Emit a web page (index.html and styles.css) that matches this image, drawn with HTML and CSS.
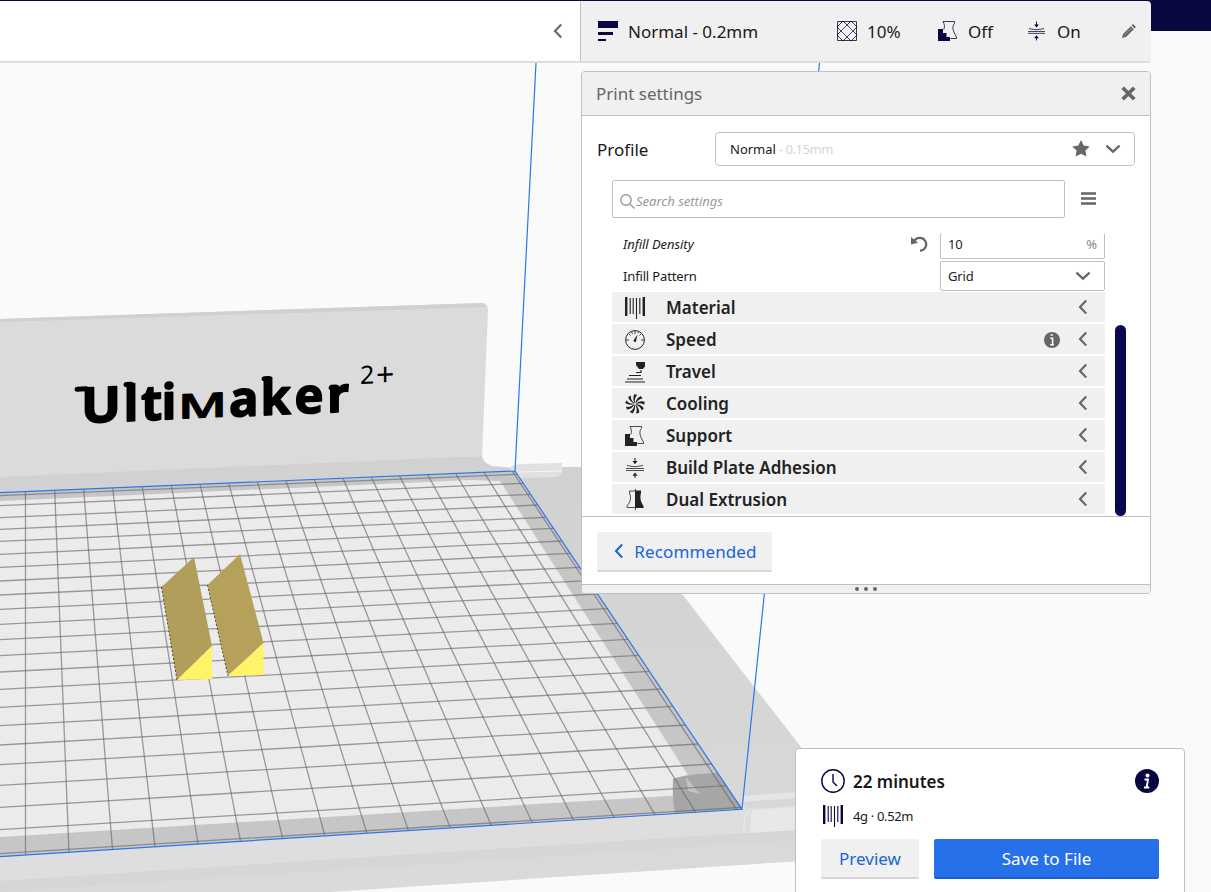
FILE: index.html
```html
<!DOCTYPE html>
<html lang="en">
<head>
<meta charset="utf-8">
<title>Print settings</title>
<link rel="stylesheet" href="styles.css">
</head>
<body>
<svg class="defs" width="0" height="0" aria-hidden="true">
  <symbol id="left" viewBox="0 0 10 16"><path d="M8.200 1.600 2 8l6.200 6.400" fill="none" stroke="currentColor" stroke-width="2.100"/></symbol>
  <symbol id="down" viewBox="0 0 16 10"><path d="M1.400 1.600 8 7.700l6.600-6.100" fill="none" stroke="currentColor" stroke-width="2.300"/></symbol>
  <symbol id="spool" viewBox="0 0 20 22"><path d="M1.200 0v19M18.800 0v19" stroke="currentColor" stroke-width="2.400"/><path d="M5.200 1v16M8.200 1v16M11.500 1v21M14.800 1v16" stroke="currentColor" stroke-width="1.100"/></symbol>
  <symbol id="support" viewBox="0 0 20 20"><path d="M5 .5h11.500v1.800c-3 3.500-1.500 8 2 13.700v1.500h-6" fill="none" stroke="currentColor" stroke-width=".8"/><path d="M5 .5c1.500 2.700 2 5 .8 8" fill="none" stroke="currentColor" stroke-width=".8"/><path d="M0 8h5v4h3.500v4H12v4H0z" fill="currentColor"/></symbol>
  <symbol id="adhesion" viewBox="0 0 18 20"><path d="M0 10.500h18M0 12.500h18M1 7.500q8 2.500 16 0" fill="none" stroke="currentColor" stroke-width=".8"/><path d="M9 0v4M9 16v4" stroke="currentColor"/><path d="M6.500 3h5L9 6.300zM6.500 17.800h5L9 14.500z" fill="currentColor"/></symbol>
</svg>

<div class="app">
  <svg class="viewport" viewBox="0 0 1211 892">
    <defs>
      <linearGradient id="floor" x1="0" y1="0" x2="0" y2="1"><stop offset="0" stop-color="#d1d1d1"/><stop offset="1" stop-color="#dadada"/></linearGradient>
      <pattern id="fine" width="3" height="3" patternUnits="userSpaceOnUse" patternTransform="skewY(-3)"><path d="M0 .5h3M.5 0v3" stroke="#777" stroke-opacity=".04"/></pattern>
    </defs>
    <path d="M0 470 482 456q1 7 10 10l23 2 4-1h62l101 127 119 153v114L330 892H0z" fill="url(#floor)"/>
    <path d="M0 319 483 303q5 1 5 7l-6 146L0 477z" fill="#dbdbdb"/>
    <path d="M0 319 483 303l3 4L0 322z" fill="#d0d0d0"/>
    <path d="M0 857 742 809l54-4v25L400 855 33 879 0 881z" fill="#dedede"/>
    <path d="M0 881 400 855 796 830v10L400 866 0 892z" fill="#d6d6d6"/>
    <path d="M742 796l54-4v13l-54 4z" fill="#e5e5e5"/><path d="M742 802l54-4v8l-50 3z" fill="#d8d8d8"/>
    <path d="M752 810l44-3v23l-46 3z" fill="#e8e8e8"/><path d="M744 833q-1-18 5-22" fill="none" stroke="#eee"/>
    <path d="M519 464l43-1v11l-5 3-38 1-8-6v-6z" fill="#e1e1e1"/><path d="M519 472l43-1" stroke="#f5f5f5"/>
    <path d="M0 492.700 515 471 742 809 0 856.700z" fill="#c8c8c8"/>
    <path d="M0 501 470 480l30 1 27 42 173 271L0 837z" fill="#eee"/>
    <path d="M673 779q12-5 44-6l25 36-67 4q-3-15-2-34z" fill="#a7a7a7"/>
    <path d="M686 777l14 17-12-3z" fill="#c4c4c4"/>
    <path d="M0 492.700 515 471 742 809 0 856.700z" fill="url(#fine)"/>
    <g fill="none" stroke="#68696c" stroke-opacity=".64" stroke-width="1.300">
      <path d="M25.500 491.600V855.100M54.700 490.400 69 852.300M83.700 489.200 112.500 849.500M112.700 488 155 846.800M142.300 486.700 198 844.100M171.300 485.500 240.500 841.400M200 484.300 282.700 838.700M228.700 483.100 325 836M257.300 481.900 367 833.300M286 480.700 408.500 830.600M314.300 479.500 450.300 828M343 478.200 491.300 825.400M371.300 477.100 532.300 822.700M399.500 475.900 573.700 820.100M427.700 474.700 614.300 817.500M455.700 473.500 655 814.900M484 472.300 695.700 812.300M512.300 471.100 736.700 809.700"/>
      <path d="M0 495.700 517.200 474.300M0 505.700 523.300 483.300M0 517.700 530.600 494.300M0 529.300 537.800 505M0 541.300 546.100 517.300M0 554.300 553.500 528.300M0 567.300 562 541M0 581 570.300 553.300M0 595 579.700 567.300M0 609.300 588.700 580.700M0 624.300 597.600 594M0 639.700 607.500 608.700M0 655.700 617.300 623.300M0 672 628 639.300M0 689.300 638.800 655.300M0 707.300 649.500 671.300M0 725.700 661.400 689M0 745 673 706.300M0 764.700 685.600 725M0 785.300 698.300 744M0 807.300 711.800 764M0 829.700 726.300 785.700M0 853.700 740.900 807.300"/>
    </g>
    <path d="M0 492.700 515 471 742 809.300 0 856.700M536 63 515 471M819.500 63 742 809" fill="none" stroke="#2c76ea" stroke-width="1.200"/>
    <path d="M194 557 212 646 177 680 161.500 587z" fill="#b29e5b"/><path d="M240 554 263.500 643 228 676 207.500 585z" fill="#b6a15b"/>
    <path d="M212 646v33l-35 1zM263.500 643v32l-36 1z" fill="#fff368"/>
    <path d="M161.500 587 177 680M207.500 585 228 676" stroke="#4f482f" stroke-dasharray="2 2"/>
    <g class="brand" transform="matrix(1 -.043 0 1 0 426.500)">
      <text y="0"><tspan x="81" textLength="40" lengthAdjust="spacingAndGlyphs">U</tspan><tspan x="123.500">l</tspan><tspan x="141">t</tspan><tspan x="161.500">i</tspan></text>
      <text class="small-cap" x="178" y="0" textLength="49" lengthAdjust="spacingAndGlyphs">m</text>
      <text y="0"><tspan x="229">a</tspan><tspan x="260.500">k</tspan><tspan x="294.500">e</tspan><tspan x="327">r</tspan></text>
      <path d="M77-34h9M126-36.500h5M264-36.500h5M331-24.500h6" stroke="#000" stroke-width="5" stroke-linecap="round"/>
      <text class="model" y="-27" x="360">2</text><text class="model plus" y="-24" x="376">+</text>
    </g>
  </svg>

  <header class="navbar"></header>
  <div class="stage">
    <div class="stage-main"><svg class="chev" width="10" height="16"><use href="#left"/></svg></div>
    <div class="summary">
      <svg class="profile-icon" width="20" height="20"><path d="M0 0h20v7H0zM0 11h15v3H0zM0 18h8v2H0z" fill="#08073f"/></svg>
      <span class="sum-name">Normal - 0.2mm</span>
      <svg class="navy" width="20" height="20" fill="none" stroke="currentColor"><path d="M.5.500h19v19H.5zM0 6 6 0M0 14 14 0M6 20 20 6M14 20l6-6M0 6l14 14M0 14l6 6M6 0l14 14M14 0l6 6" stroke-width=".8"/><path d="M10 4.500 15.500 10 10 15.500 4.500 10z" fill="#f0f0f0" stroke="none"/></svg>
      <span class="sum-infill">10%</span>
      <svg class="navy" width="20" height="20"><use href="#support"/></svg>
      <span class="sum-support">Off</span>
      <svg class="navy" width="17" height="20"><use href="#adhesion"/></svg>
      <span class="sum-adhesion">On</span>
      <svg class="pencil" width="14" height="14"><path d="M0 14 1 10 8.800 2.200l3 3L4 13zM9.600 1.400 11 0l3 3-1.400 1.400z" fill="#666"/><path d="m2.500 11 7-7" stroke="#aaa" stroke-width=".7"/></svg>
    </div>
  </div>

  <section class="panel">
    <div class="panel-head"><span>Print settings</span><svg width="15" height="15"><path d="m1.700 1.700 11.600 11.600m0-11.600L1.700 13.300" stroke="#666" stroke-width="3.700"/></svg></div>
    <div class="profile"><label>Profile</label>
      <div class="combo"><span>Normal</span><span class="faint">- 0.15mm</span>
        <svg class="star" width="18" height="17"><path d="m9 0 2.700 5.500 6 .9-4.300 4.200 1 6L9 13.800l-5.400 2.800 1-6L.3 6.400l6-.9z" fill="#666"/></svg>
        <svg width="16" height="10"><use href="#down"/></svg></div>
    </div>
    <div class="search-row">
      <div class="search"><svg width="15" height="15" fill="none" stroke="#999" stroke-width="1.400"><circle cx="6" cy="6" r="5.200"/><path d="m10 10 4.500 4.500"/></svg><span>Search settings</span></div>
      <svg width="15" height="13"><path d="M0 1.500h15M0 6.500h15M0 11.500h15" stroke="#666" stroke-width="2.600"/></svg>
    </div>
    <div class="list-wrap">
      <div class="list">
        <div class="setting"><em>Infill Density</em><svg class="reset" width="17" height="16"><path d="M3.500 4.700A6.400 6.400 0 1 1 9 14.700" fill="none" stroke="#666" stroke-width="2.200"/><path d="M0 1v7.500l7-1.800z" fill="#666"/></svg><div class="field cut"><span>10</span><span class="unit">%</span></div></div>
        <div class="setting second"><span>Infill Pattern</span><div class="field"><span>Grid</span><svg width="16" height="10"><use href="#down"/></svg></div></div>
        <div class="cats">
          <div class="cat"><svg width="20" height="22"><use href="#spool"/></svg><b>Material</b><svg class="chev" width="10" height="16"><use href="#left"/></svg></div>
          <div class="cat"><svg width="20" height="20" fill="none" stroke="#222"><circle cx="10" cy="10" r="9.400"/><path d="M10 1v3M1 10h3M16 10h3M3.600 3.600l2 2M16.400 3.600l-2 2M6.500 1.700l1 2.500M13.500 1.700l-.6 1.500" stroke-width=".8"/><path d="m8.500 10.500 4-6-1.500 7q-1.500 1.500-2.500-1z" fill="#222" stroke="none"/></svg><b>Speed</b><svg class="info" width="16" height="16"><circle cx="8" cy="8" r="8" fill="#666"/><path d="M6.300 6.200h2.300v6M6.300 12.700h3.600M6.700 3h2.200" fill="none" stroke="#fff" stroke-width="1.500"/></svg><svg class="chev" width="10" height="16"><use href="#left"/></svg></div>
          <div class="cat"><svg width="21" height="22"><path d="M11 1h10v3l-3 4h-4l-3-4z" fill="#222"/><path d="M11 11.500h5V9M4 14.500h12M2 18h16M0 21h20" fill="none" stroke="#222" stroke-width="1.100"/></svg><b>Travel</b><svg class="chev" width="10" height="16"><use href="#left"/></svg></div>
          <div class="cat"><svg width="20" height="20"><g fill="#222"><path id="blade" d="M9.700 9Q7.200 4.500 9.200.3L12.300.8Q9 4 10.200 9z"/><use href="#blade" transform="rotate(40 10 10)"/><use href="#blade" transform="rotate(80 10 10)"/><use href="#blade" transform="rotate(120 10 10)"/><use href="#blade" transform="rotate(160 10 10)"/><use href="#blade" transform="rotate(200 10 10)"/><use href="#blade" transform="rotate(240 10 10)"/><use href="#blade" transform="rotate(280 10 10)"/><use href="#blade" transform="rotate(320 10 10)"/></g></svg><b>Cooling</b><svg class="chev" width="10" height="16"><use href="#left"/></svg></div>
          <div class="cat"><svg width="20" height="20"><use href="#support"/></svg><b>Support</b><svg class="chev" width="10" height="16"><use href="#left"/></svg></div>
          <div class="cat"><svg width="20" height="20"><use href="#adhesion"/></svg><b>Build Plate Adhesion</b><svg class="chev" width="10" height="16"><use href="#left"/></svg></div>
          <div class="cat"><svg width="20" height="21"><path d="M10 2H4.500v2c2 5 1 9-2.500 13v1.500h8" fill="none" stroke="#222" stroke-width=".8"/><path d="M10 1.500h6v2.500c-1.500 5 0 9 2.500 13v2H10z" fill="#222"/><path d="M10.500 0v21" stroke="#222" stroke-width=".8"/></svg><b>Dual Extrusion</b><svg class="chev" width="10" height="16"><use href="#left"/></svg></div>
        </div>
      </div>
      <div class="scrollbar"></div>
    </div>
    <div class="panel-foot"><div class="btn recommended"><svg class="chev" width="10" height="16"><use href="#left"/></svg><span>Recommended</span></div></div>
    <div class="grip"><i></i><i></i><i></i></div>
  </section>

  <section class="job">
    <div class="job-row"><svg width="24" height="24" fill="none" stroke="#08073f" stroke-width="1.400"><circle cx="12" cy="12" r="11.200"/><path d="M12 5v8l4 4"/></svg><b>22 minutes</b>
      <svg class="job-info" width="24" height="24"><circle cx="12" cy="12" r="12" fill="#08073f"/><circle cx="12.500" cy="6.500" r="2" fill="#fff"/><path d="M9.500 10.500h3.500l-1.300 7.500q.3 1.200 2.500.2M9 18.500h4" fill="none" stroke="#fff" stroke-width="1.900"/></svg></div>
    <div class="job-row usage"><svg class="navy" width="20" height="22"><use href="#spool"/></svg><span>4g · 0.52m</span></div>
    <div class="actions"><div class="btn preview">Preview</div><div class="btn save">Save to File</div></div>
  </section>
</div>
</body>
</html>
```

FILE: styles.css
```css
* { box-sizing: border-box; }
body { margin: 0; background: #fafafa; color: #191919; font: 17px/24px "Noto Sans", sans-serif; }
svg { display: block; flex: none; }
.defs { position: absolute; }
.app { position: relative; width: 1211px; height: 892px; overflow: hidden; }
.viewport { position: absolute; inset: 0; width: 1211px; height: 892px; }
.brand text { font: 700 49px "Open Sans", sans-serif; stroke: #000; stroke-width: 1.6px; stroke-linejoin: round; }
.brand .small-cap { font-variant-caps: small-caps; font-weight: 600; stroke-width: 1px; }
.brand .model { font: 400 25px "Noto Sans", sans-serif; stroke: none; }
.brand .plus { font-size: 32px; font-weight: 400; }
.navbar { position: relative; height: 31px; background: #08073f; }
.navy { color: #08073f; }
.chev { color: #666; }

.stage { position: relative; margin-top: -30px; display: flex; width: 1151px; height: 62px; white-space: nowrap; }
.stage-main { width: 580px; height: 62px; background: #fff; border-bottom: 2px solid #dedede; display: flex; align-items: center; justify-content: flex-end; padding-right: 17px; }
.summary { width: 571px; height: 62px; display: flex; align-items: center; padding-left: 17px; background: #f0f0f0; border-left: 1px solid #c0c0c0; border-bottom: 2px solid #dedede; border-radius: 0 4px 4px 0; }
.summary span { padding-top: 2px; }
.sum-name { width: 209px; margin-left: 10px; }
.sum-infill { width: 71px; margin-left: 10px; }
.sum-support { width: 60px; margin-left: 10px; }
.sum-adhesion { width: 65px; margin-left: 12px; }

.panel { position: absolute; left: 581px; top: 71px; width: 570px; height: 523px; display: flex; flex-direction: column; background: #fff; border: 1px solid #c0c0c0; border-radius: 4px; overflow: hidden; white-space: nowrap; }
.panel-head { height: 44px; display: flex; align-items: center; justify-content: space-between; padding: 0 14px; background: #f0f0f0; border-bottom: 1px solid #c0c0c0; color: #666; }
.profile { height: 64px; display: flex; align-items: center; justify-content: space-between; padding: 2px 15px 0; }
.profile label { padding-top: 2px; }
.combo { width: 420px; height: 34px; display: flex; align-items: center; padding: 0 13px 0 14px; border: 1px solid #c0c0c0; border-radius: 4px; font-size: 13px; }
.combo svg { color: #666; margin-top: -1px; }
.faint { color: #d5d5d5; margin-left: 3px; letter-spacing: -.45px; }
.combo .star { margin: -2px 15px 0 auto; }
.search-row { height: 38px; display: flex; padding-left: 30px; }
.search { width: 453px; height: 38px; border: 1px solid #c0c0c0; border-radius: 2px; display: flex; align-items: center; padding: 4px 7px 0; color: #999; font-size: 13px; font-style: italic; }
.search span { margin-left: 1px; }
.search-row > svg { margin: 12px 0 0 16px; }
.list-wrap { display: flex; height: 299px; padding: 15px 0 0 30px; border-bottom: 1px solid #c0c0c0; }
.list { width: 493px; font-size: 13px; }
.setting { height: 28px; display: flex; align-items: center; padding-left: 11px; letter-spacing: -.15px; }
.setting.second { height: 31px; padding-bottom: 1px; }
.setting svg { color: #666; }
.setting em { margin-top: -6px; letter-spacing: -.05px; }
.field { width: 165px; height: 30px; margin-left: auto; padding: 0 13px 0 7px; display: flex; align-items: center; justify-content: space-between; border: 1px solid #c0c0c0; border-radius: 2px; color: #222; }
.cut { height: 26px; margin: -2px 0 0 12px; padding-right: 7px; padding-bottom: 4px; border-top: 0; }
.setting .reset { margin: -7px 0 0 auto; }
.unit { color: #888; }
.cats { display: grid; gap: 2px; }
.cat { height: 30px; display: flex; align-items: center; padding: 0 17px 0 13px; background: #f0f0f0; color: #222; }
.cat > svg:first-child { width: 20px; margin-top: 1px; }
.cat b { font-size: 17px; font-weight: 600; margin-left: 21px; padding-top: 2px; }
.cat .chev { margin-left: auto; margin-top: 0; }
.info { margin-left: auto; margin-top: 2px; }
.cat .info + .chev { margin-left: 18px; }
.scrollbar { width: 11px; height: 191px; margin: 92px 0 0 10px; border-radius: 6px; background: #0a0850; }
.panel-foot { height: 67px; padding: 15px; }
.btn { height: 40px; padding-top: 2px; display: flex; align-items: center; justify-content: center; background: #f0f0f0; border-bottom: 2px solid #d6d6d6; border-radius: 2px; color: #2063d6; }
.recommended { width: 175px; gap: 10px; padding-left: 2px; letter-spacing: .12px; }
.recommended .chev { color: #2063d6; margin-top: -3px; }
.grip { flex: 1; display: flex; gap: 5px; align-items: center; justify-content: center; background: #f0f0f0; border-top: 1px solid #c0c0c0; }
.grip i { width: 4px; height: 4px; border-radius: 2px; background: #666; }

.job { position: absolute; left: 795px; top: 748px; width: 390px; height: 160px; padding: 20px 25px; background: #fff; border: 1px solid #c0c0c0; border-radius: 4px; white-space: nowrap; }
.job-row { display: flex; height: 24px; align-items: center; }
.job-row b { font-weight: 600; margin-left: 8px; padding-top: 2px; }
.job-info { margin-left: auto; }
.usage { margin-top: 11px; padding-left: 2px; font-size: 13px; letter-spacing: -.35px; }
.usage span { margin-left: 10px; }
.actions { display: flex; justify-content: space-between; margin-top: 11px; }
.preview { width: 98px; }
.save { width: 225px; color: #fff; background: #2670e9; border-color: #1a5fce; }
```
